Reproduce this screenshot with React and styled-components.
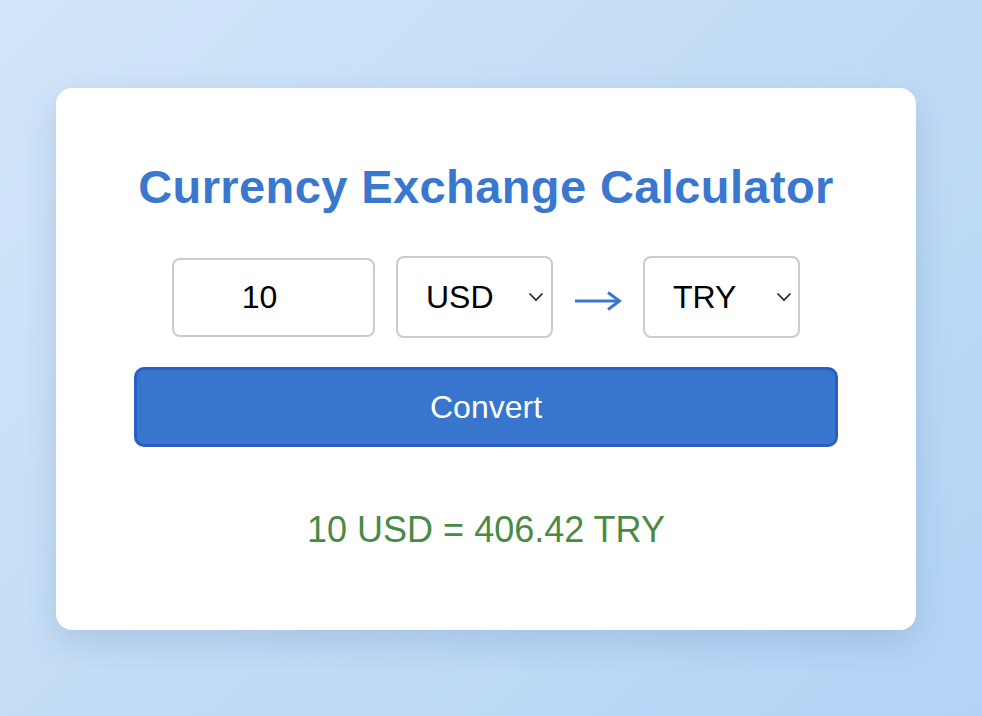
import React, { useState } from "react";
import styled, { createGlobalStyle } from "styled-components";

const GlobalStyle = createGlobalStyle`
  html, body {
    margin: 0;
    padding: 0;
  }
  body {
    min-height: 716px;
    font-family: "Liberation Sans", Arial, sans-serif;
    background: linear-gradient(135deg, #d1e5f9 0%, #c2dcf5 50%, #b2d3f5 100%);
  }
`;

const Page = styled.div`
  box-sizing: border-box;
  min-height: 716px;
  padding: 88px 0 0 56px;
`;

const Card = styled.div`
  box-sizing: border-box;
  width: 860px;
  height: 542px;
  padding: 72px 78px 0;
  background: #ffffff;
  border-radius: 16px;
  box-shadow: 0 12px 32px rgba(40, 80, 130, 0.16);
  display: flex;
  flex-direction: column;
  align-items: center;
`;

const Title = styled.h1`
  margin: 0;
  font-size: 47px;
  line-height: 54px;
  letter-spacing: 0.4px;
  font-weight: 700;
  color: #3a77cf;
  text-align: center;
  white-space: nowrap;
`;

const Row = styled.div`
  margin-top: 42px;
  height: 82px;
  display: flex;
  align-items: center;
  gap: 21px;
`;

const AmountInput = styled.input`
  box-sizing: border-box;
  width: 203px;
  height: 79px;
  padding: 0 38px 0 10px;
  border: 2px solid #cccccc;
  border-radius: 8px;
  font-family: inherit;
  font-size: 32px;
  color: #000;
  text-align: center;
  outline: none;
`;

const SelectWrap = styled.div`
  position: relative;
  width: 157px;
  height: 82px;
`;

const Select = styled.select`
  appearance: none;
  box-sizing: border-box;
  width: 100%;
  height: 100%;
  padding: 0 0 0 28px;
  border: 2px solid #cccccc;
  border-radius: 8px;
  background: #fff;
  font-family: inherit;
  font-size: 32px;
  color: #000;
  outline: none;
`;

const Chevron = styled.svg`
  position: absolute;
  right: ${(p) => p.$right}px;
  top: 36px;
  width: 16px;
  height: 10px;
  pointer-events: none;
`;

const Arrow = styled.svg`
  width: 48px;
  height: 20px;
  margin-top: 8px;
  display: block;
`;

const ConvertButton = styled.button`
  box-sizing: border-box;
  margin-top: 29px;
  width: 100%;
  height: 80px;
  border: 3px solid #2b5dc7;
  border-radius: 10px;
  background: #3875cc;
  color: #ffffff;
  font-family: inherit;
  font-size: 32px;
  cursor: pointer;
`;

const Result = styled.p`
  margin: 62px 0 0;
  font-size: 36px;
  line-height: 42px;
  color: #4a8a46;
  text-align: center;
`;

const CurrencySelect = ({ value, onChange, right }) => (
  <SelectWrap>
    <Select value={value} onChange={(e) => onChange(e.target.value)}>
      <option>USD</option>
      <option>EUR</option>
      <option>GBP</option>
      <option>TRY</option>
    </Select>
    <Chevron $right={right} viewBox="0 0 16 10">
      <path d="M1.5 1.5 L8 8 L14.5 1.5" fill="none" stroke="#222" strokeWidth="1.6" />
    </Chevron>
  </SelectWrap>
);

const App = () => {
  const [amount, setAmount] = useState("10");
  const [from, setFrom] = useState("USD");
  const [to, setTo] = useState("TRY");

  return (
    <Page>
      <GlobalStyle />
      <Card>
        <Title>Currency Exchange Calculator</Title>
        <Row>
          <AmountInput
            type="text"
            value={amount}
            onChange={(e) => setAmount(e.target.value)}
          />
          <CurrencySelect value={from} onChange={setFrom} right={9} />
          <Arrow viewBox="0 0 48 20">
            <path d="M1 10 H45" stroke="#3a77cf" strokeWidth="3" />
            <path d="M34 1.5 L45.5 10 L34 18.5" fill="none" stroke="#3a77cf" strokeWidth="3" />
          </Arrow>
          <CurrencySelect value={to} onChange={setTo} right={8} />
        </Row>
        <ConvertButton>Convert</ConvertButton>
        <Result>
          {amount} {from} = 406.42 {to}
        </Result>
      </Card>
    </Page>
  );
};

export default App;
